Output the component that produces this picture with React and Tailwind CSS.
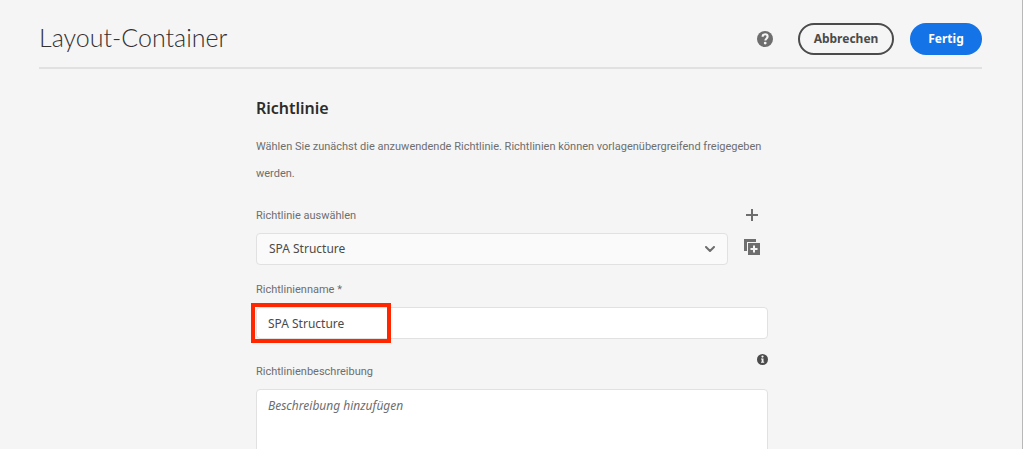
import React from "react";

function HelpIcon() {
  return (
    <svg viewBox="0 0 16 16" className="size-4" aria-hidden="true">
      <circle cx="8" cy="8" r="8" fill="#6e6e6e" />
      <path
        d="M5.4 5.7C5.7 4.2 6.7 3.3 8.1 3.3c1.5 0 2.5.9 2.5 2.2 0 1.1-.7 1.6-1.3 2.2-.6.5-.9.9-.9 1.8"
        fill="none"
        stroke="#f5f5f5"
        strokeWidth="2.1"
      />
      <circle cx="8.2" cy="12.1" r="1.4" fill="#f5f5f5" />
    </svg>
  );
}

function AddIcon() {
  return (
    <svg viewBox="0 0 12 12" className="size-3" aria-hidden="true">
      <path d="M5 0h2v5h5v2H7v5H5V7H0V5h5z" fill="#6e6e6e" />
    </svg>
  );
}

function DuplicateIcon() {
  return (
    <svg viewBox="0 0 16 16" className="size-4" aria-hidden="true">
      <path d="M0 0h12v3H3v9H0z" fill="#6e6e6e" />
      <path d="M4 4h12v12H4z" fill="#6e6e6e" />
      <path d="M9 6.5h2v2.5h2.5v2h-2.5v2.5h-2v-2.5H6.5v-2h2.5z" fill="#f5f5f5" />
    </svg>
  );
}

function ChevronIcon() {
  return (
    <svg
      viewBox="0 0 10 6"
      className="pointer-events-none absolute top-[13px] right-[13px] h-1.5 w-2.5"
      aria-hidden="true"
    >
      <path
        d="M1 1l4 4 4-4"
        fill="none"
        stroke="#6e6e6e"
        strokeWidth="2"
        strokeLinecap="round"
        strokeLinejoin="round"
      />
    </svg>
  );
}

function InfoIcon() {
  return (
    <svg viewBox="0 0 11 11" className="size-[11px]" aria-hidden="true">
      <circle cx="5.5" cy="5.5" r="5.5" fill="#4b4b4b" />
      <circle cx="5.5" cy="2.6" r="1.1" fill="#f5f5f5" />
      <path d="M4 4.5h2.5v3.2H7.2v1H4v-1h.7V5.5H4z" fill="#f5f5f5" />
    </svg>
  );
}

const labelStyle = "flex h-8 items-center pt-0.5 font-[Roboto,sans-serif] text-[11px] text-[#6e6e6e]";

export default function App() {
  return (
    <div className="h-screen overflow-hidden border-r border-[#b8b8b8] bg-[#f5f5f5] font-['Noto_Sans',sans-serif] text-[#4b4b4b]">
      <header className="mr-10 ml-[39px] flex items-center border-b-2 border-[#e1e1e1] pt-[23px] pb-3">
        <h1 className="flex-1 pb-1 font-[Lato,sans-serif] text-[25px] leading-7 font-light text-[#323232]">
          Layout-Container
        </h1>
        <button type="button" aria-label="Hilfe" className="mr-[17px] flex size-8 items-center justify-center">
          <HelpIcon />
        </button>
        <div className="flex gap-4 text-xs leading-5 font-bold">
          <button
            type="button"
            className="flex h-8 w-24 items-center justify-center rounded-full border-2 border-[#4b4b4b]"
          >
            Abbrechen
          </button>
          <button
            type="button"
            className="flex h-8 w-18 items-center justify-center rounded-full bg-[#1473e6] text-white"
          >
            Fertig
          </button>
        </div>
      </header>

      <main className="pt-[27px] pl-0.5">
        <form className="mx-auto max-w-lg">
          <h2 className="text-base leading-6 font-semibold text-[#2c2c2c]">Richtlinie</h2>
          <p className="mt-[13px] font-[Roboto,sans-serif] text-[11px] leading-[27px] text-[#6e6e6e]">
            Wählen Sie zunächst die anzuwendende Richtlinie. Richtlinien können vorlagenübergreifend freigegeben
            werden.
          </p>

          <div className="mt-3 flex gap-2">
            <div className="flex-1">
              <label htmlFor="policy" className={labelStyle}>
                Richtlinie auswählen
              </label>
              <div className="relative mt-0.5">
                <select
                  id="policy"
                  className="h-8 w-full appearance-none rounded border border-[#e1e1e1] bg-[#fafafa] pr-8 pl-3 text-xs"
                >
                  <option>SPA Structure</option>
                </select>
                <ChevronIcon />
              </div>
            </div>
            <div className="flex flex-col">
              <button type="button" aria-label="Richtlinie hinzufügen" className="flex size-8 items-center justify-center">
                <AddIcon />
              </button>
              <button type="button" aria-label="Richtlinie duplizieren" className="flex size-8 items-center justify-center">
                <DuplicateIcon />
              </button>
            </div>
          </div>

          <label htmlFor="policy-name" className={`mt-2 ${labelStyle}`}>
            Richtlinienname *
          </label>
          <div className="relative mt-0.5">
            <input
              id="policy-name"
              type="text"
              defaultValue="SPA Structure"
              className="block h-8 w-full rounded border border-[#e1e1e1] bg-white px-[11px] text-xs"
            />
            <div className="pointer-events-none absolute -top-1 -left-[5px] h-10 w-35 border-4 border-[#ff2600]" />
          </div>

          <div className="mt-2.5 flex justify-between pt-1">
            <label htmlFor="policy-description" className={`mt-0.5 ${labelStyle}`}>
              Richtlinienbeschreibung
            </label>
            <button type="button" aria-label="Information" className="flex h-3 w-3 items-center justify-center">
              <InfoIcon />
            </button>
          </div>
          <textarea
            id="policy-description"
            placeholder="Beschreibung hinzufügen"
            className="mt-0.5 block h-24 w-full resize-none rounded border border-[#e1e1e1] bg-white px-[11px] py-1.5 text-xs leading-5 placeholder:text-[#6e6e6e] placeholder:italic"
          />
        </form>
      </main>
    </div>
  );
}
